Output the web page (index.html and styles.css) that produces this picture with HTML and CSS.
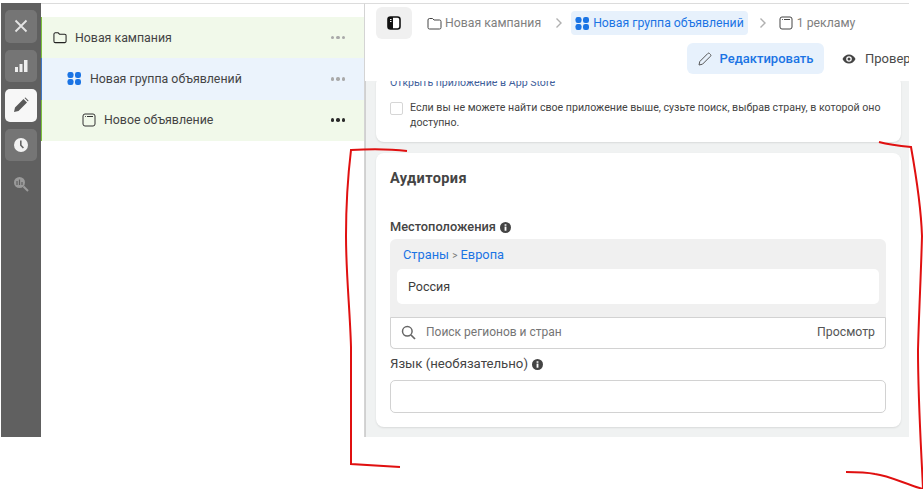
FILE: index.html
```
<!DOCTYPE html>
<html lang="ru">
<head>
<meta charset="utf-8">
<title>Аудитория</title>
<link rel="stylesheet" href="styles.css">
</head>
<body>
<div class="page">
  <div class="app">
    <nav class="rail">
      <button class="rail-btn"><svg width="16" height="16" viewBox="0 0 16 16"><path d="M2.500 2.500l11 11M13.500 2.500l-11 11" stroke="#e4e4e4" stroke-width="1.800" fill="none"/></svg></button>
      <button class="rail-btn"><svg width="15" height="15" viewBox="0 0 15 15"><path d="M1 9h3v5H1zM5.500 6h3v8h-3zM10 2h3.500v12H10z" fill="#eeeeee"/></svg></button>
      <button class="rail-btn rail-active"><svg width="16" height="16" viewBox="0 0 16 16"><path d="M1 15l1-4.500L10.500 2 14 5.500 5.500 14zM11.500 1l1-.5 3 3-.5 1z" fill="#5a5a5a"/></svg></button>
      <button class="rail-btn"><svg width="16" height="16" viewBox="0 0 16 16"><circle cx="8" cy="8" r="7" fill="#f2f2f2"/><path d="M7.800 3.500v4.700l2.600 2.800" stroke="#666" stroke-width="1.600" fill="none"/></svg></button>
      <div class="rail-plain"><svg width="16" height="16" viewBox="0 0 16 16"><circle cx="6.500" cy="6.500" r="5.500" fill="#9a9a9a"/><path d="M10.500 10.500l4.500 4.500" stroke="#9a9a9a" stroke-width="2"/><path d="M4 5v4M6.500 3.500V9M9 6v3" stroke="#606060" stroke-width="1.200"/></svg></div>
    </nav>

    <aside class="tree">
      <div class="tree-row row-green depth-0">
        <svg class="tree-icon" width="14" height="13" viewBox="0 0 15 13"><path d="M1 3a1.500 1.500 0 0 1 1.500-1.500h3L7 3h5.500A1.500 1.500 0 0 1 14 4.500v6a1.500 1.500 0 0 1-1.500 1.500h-10A1.500 1.500 0 0 1 1 10.500z" fill="none" stroke="#222" stroke-width="1.100"/></svg>
        <span class="tree-label">Новая кампания</span>
        <span class="dots dots-muted"><i></i><i></i><i></i></span>
      </div>
      <div class="tree-row row-blue depth-1">
        <svg class="tree-icon" width="15" height="15" viewBox="0 0 15 15"><rect x="0.500" y="1" width="6" height="6" rx="2.200" fill="#1b74e4"/><rect x="8" y="1" width="6" height="6" rx="2.200" fill="#1b74e4"/><rect x="0.500" y="8" width="6" height="6" rx="2.200" fill="#1b74e4"/><rect x="8" y="8" width="6" height="6" rx="2.200" fill="#1b74e4"/></svg>
        <span class="tree-label">Новая группа объявлений</span>
        <span class="dots dots-muted"><i></i><i></i><i></i></span>
      </div>
      <div class="tree-row row-green depth-2">
        <svg class="tree-icon" width="14" height="14" viewBox="0 0 14 14"><rect x="1" y="1" width="12" height="12" rx="2" fill="none" stroke="#333" stroke-width="1"/><path d="M3 3.500h.8M5 3.500h6" stroke="#333" stroke-width="1"/></svg>
        <span class="tree-label">Новое объявление</span>
        <span class="dots"><i></i><i></i><i></i></span>
      </div>
    </aside>

    <main class="main">
      <header class="header">
        <div class="crumbs">
          <button class="panel-btn"><svg width="14" height="14" viewBox="0 0 14 14"><rect x="1" y="1" width="12" height="12" rx="2.500" fill="#fff" stroke="#111" stroke-width="1.600"/><path d="M1 3a2 2 0 0 1 2-2h3v12H3a2 2 0 0 1-2-2z" fill="#111"/><path d="M3 3.500h1.500M3 5.500h1.500" stroke="#fff" stroke-width="1"/></svg></button>
          <span class="crumb">
            <svg width="15" height="13" viewBox="0 0 15 13"><path d="M1 3a1.500 1.500 0 0 1 1.500-1.500h3L7 3h5.500A1.500 1.500 0 0 1 14 4.500v6a1.500 1.500 0 0 1-1.500 1.500h-10A1.500 1.500 0 0 1 1 10.500z" fill="none" stroke="#444" stroke-width="1"/></svg>
            Новая кампания</span>
          <svg class="chev chev-first" width="8" height="12" viewBox="0 0 8 12"><path d="M1.500 1.500L6 6l-4.500 4.500" fill="none" stroke="#b0b0b0" stroke-width="1.400"/></svg>
          <span class="crumb crumb-active">
            <svg width="15" height="15" viewBox="0 0 15 15"><rect x="0.500" y="1" width="6" height="6" rx="2.200" fill="#1b74e4"/><rect x="8" y="1" width="6" height="6" rx="2.200" fill="#1b74e4"/><rect x="0.500" y="8" width="6" height="6" rx="2.200" fill="#1b74e4"/><rect x="8" y="8" width="6" height="6" rx="2.200" fill="#1b74e4"/></svg>
            Новая группа объявлений</span>
          <svg class="chev chev-second" width="8" height="12" viewBox="0 0 8 12"><path d="M1.500 1.500L6 6l-4.500 4.500" fill="none" stroke="#b0b0b0" stroke-width="1.400"/></svg>
          <span class="crumb crumb-last">
            <svg width="14" height="14" viewBox="0 0 14 14"><rect x="1" y="1" width="12" height="12" rx="2" fill="none" stroke="#444" stroke-width="1"/><path d="M3 3.500h.8M5 3.500h6" stroke="#444" stroke-width="1"/></svg>
            1 рекламу</span>
        </div>
        <div class="actions">
          <button class="edit-btn"><svg width="14" height="14" viewBox="0 0 14 14"><path d="M1 13l.8-3.500L9.800 1.500a1.200 1.200 0 0 1 1.700 0l1 1a1.200 1.200 0 0 1 0 1.700L4.500 12.200z" fill="none" stroke="#555" stroke-width="1"/></svg>Редактировать</button>
          <span class="review"><svg width="14" height="10" viewBox="0 0 14 10"><path d="M.5 5C2 2 4.300.5 7 .5S12 2 13.500 5C12 8 9.700 9.500 7 9.500S2 8 .5 5z" fill="#444"/><circle cx="7" cy="5" r="2.800" fill="#fff"/><circle cx="7" cy="5" r="1.500" fill="#444"/></svg>Проверить</span>
        </div>
      </header>

      <div class="scroller">
        <section class="card card-app">
          <a class="store-link">Открыть приложение в App Store</a>
          <div class="check-row">
            <span class="checkbox"></span>
            <p class="check-text">Если вы не можете найти свое приложение выше, сузьте поиск, выбрав страну, в которой оно доступно.</p>
          </div>
        </section>

        <section class="card card-audience">
          <h2 class="card-title">Аудитория</h2>
          <div class="field-label field-first">Местоположения
            <svg class="info" width="11" height="11" viewBox="0 0 12 12"><circle cx="6" cy="6" r="6" fill="#444"/><rect x="5" y="5" width="2" height="4.500" fill="#fff"/><rect x="5" y="2.500" width="2" height="1.600" fill="#fff"/></svg>
          </div>
          <div class="location">
            <div class="location-path"><a>Страны</a> <span class="sep">&gt;</span> <a>Европа</a></div>
            <div class="location-item">Россия</div>
            <div class="search">
              <svg width="15" height="15" viewBox="0 0 15 15"><circle cx="6.300" cy="6.300" r="4.800" fill="none" stroke="#666" stroke-width="1.500"/><path d="M10 10l4 4" stroke="#666" stroke-width="1.700"/></svg>
              <span class="search-text">Поиск регионов и стран</span>
              <span class="browse">Просмотр</span>
            </div>
          </div>
          <div class="field-label field-second">Язык (необязательно)
            <svg class="info" width="11" height="11" viewBox="0 0 12 12"><circle cx="6" cy="6" r="6" fill="#444"/><rect x="5" y="5" width="2" height="4.500" fill="#fff"/><rect x="5" y="2.500" width="2" height="1.600" fill="#fff"/></svg>
          </div>
          <div class="lang-input"></div>
        </section>
      </div>
    </main>
  </div>

  <svg class="scribble" width="923" height="489" viewBox="0 0 923 489">
    <path d="M407 151C390 149 370 149 351 150C348 175 346 205 346 236C346 275 350 310 351 347L351 464C367 465 383 466 400 467" />
    <path d="M879 142C890 145 900 146 911 147C916 175 921 205 922 236C921 275 919 310 918 350C918 400 921 445 923 489C905 484 890 476 875 474C865 472 855 472 846 472" />
  </svg>
</div>
</body>
</html>
```
FILE: styles.css
```
* { box-sizing: border-box; }
html, body { margin: 0; padding: 0; background: #fff; }
body { font-family: Roboto, "Liberation Sans", sans-serif; color: #3c3c3c; font-size: 12px; }
button { font: inherit; border: 0; padding: 0; }
a { color: #1b74e4; }
.page { position: relative; width: 923px; height: 489px; overflow: hidden; padding: 3px 14px 52px 1px; }
.app { display: flex; height: 434px; }

.rail { width: 40px; flex: none; background: #606060; display: flex; flex-direction: column; align-items: center; padding-top: 7px; gap: 7px; }
.rail-btn { width: 32px; height: 32.500px; background: #757575; border-radius: 5px; display: flex; align-items: center; justify-content: center; }
.rail-active { background: #f7f7f7; }
.rail-plain { height: 32px; display: flex; align-items: center; justify-content: center; }

.tree { width: 324px; flex: none; border-top: 1px solid #dcdcdc; border-right: 1px solid #d4d4d4; padding-top: 13px; }
.tree-row { height: 41.300px; display: flex; align-items: center; border-left: 1px solid #7cc13c; padding-right: 19px; font-size: 12.350px; }
.row-green { background: #f1f9ea; }
.row-blue { background: #ebf3fc; border-left-color: #3f78c6; }
.depth-0 { padding-left: 11px; }
.depth-1 { padding-left: 25px; }
.depth-2 { padding-left: 40px; }
.tree-icon { flex: none; margin-right: 8px; }
.tree-label { flex: 1; color: #444; }
.dots { display: flex; gap: 2px; }
.dots i { width: 3.500px; height: 3.500px; border-radius: 50%; background: #2a2a2a; }
.dots-muted i { background: #a9a9a9; }

.main { flex: 1; min-width: 0; display: flex; flex-direction: column; }
.header { height: 78px; flex: none; border-top: 1px solid #dcdcdc; padding: 3px 0 0 11px; overflow: hidden; }
.crumbs { display: flex; align-items: center; height: 32px; }
.panel-btn { width: 36px; height: 32px; background: #f0f0f0; border-radius: 6px; display: flex; align-items: center; justify-content: center; margin-right: 15px; flex: none; }
.crumb { display: inline-flex; align-items: center; gap: 3px; font-size: 12.250px; color: #808080; white-space: nowrap; }
.crumb svg { flex: none; }
.crumb-active { color: #1b74e4; background: #e7f1fc; border-radius: 4px; height: 24px; padding: 0 4px; }
.crumb-last { gap: 4px; }
.chev { flex: none; }
.chev-first { margin: 0 8px 0 14px; }
.chev-second { margin: 0 12px 0 11px; }
.actions { display: flex; align-items: center; margin-top: 4px; padding-left: 311px; white-space: nowrap; }
.edit-btn { flex: none; height: 31px; width: 137px; border-radius: 6px; background: #e7f1fc; color: #1b74e4; font-weight: 500; font-size: 13px; display: flex; align-items: center; justify-content: center; gap: 8px; }
.review { display: inline-flex; align-items: center; gap: 9px; margin-left: 18px; font-size: 13px; color: #4a4a4a; }

.scroller { flex: 1; min-height: 0; background: #f0f2f2; border-left: 1px solid #d0d0d0; padding: 0 8px 10px 10px; display: flex; flex-direction: column; justify-content: flex-end; gap: 11px; overflow: hidden; }
.card { flex: none; background: #fff; border-radius: 8px; box-shadow: 0 1px 2px rgba(0,0,0,.1); padding-left: 14px; padding-right: 15px; }
.card-app { padding-bottom: 12px; }
.store-link { display: block; font-size: 10.600px; line-height: 14px; color: #41609b; margin-bottom: 10px; }
.check-row { display: flex; gap: 7px; }
.checkbox { width: 13px; height: 13px; border: 1px solid #d6d6d6; border-radius: 2px; background: #fff; flex: none; margin-top: 2px; }
.check-text { margin: 0; font-size: 10.620px; line-height: 15px; color: #444; }

.card-audience { padding-top: 17px; padding-bottom: 14px; }
.card-title { margin: 0; font-size: 14.500px; line-height: 17px; font-weight: 700; color: #444; letter-spacing: .4px; }
.field-label { display: flex; align-items: center; gap: 4px; line-height: 16px; color: #444; }
.field-first { margin-top: 32px; font-size: 12.800px; font-weight: 500; }
.field-second { margin-top: 7px; font-size: 13.200px; font-weight: 400; }
.info { flex: none; }
.location { margin-top: 4px; background: #f0f0f0; border-radius: 6px 6px 4px 4px; }
.location-path { font-size: 12.800px; line-height: 16px; padding: 8px 13px 5px; color: #777; }
.sep { font-size: 10px; }
.location-item { margin: 0 7px; height: 35px; background: #fff; border-radius: 5px; display: flex; align-items: center; padding-left: 11px; font-size: 12.500px; color: #3c3c3c; }
.search { margin-top: 13px; height: 32px; background: #fff; border: 1px solid #d2d2d2; border-radius: 0 0 5px 5px; display: flex; align-items: center; padding: 0 10px 2px; font-size: 12px; }
.search-text { flex: 1; margin-left: 10px; color: #757575; }
.browse { color: #555; font-size: 12.300px; }
.lang-input { margin-top: 8px; height: 33px; border: 1px solid #d2d2d2; border-radius: 5px; background: #fff; }

.scribble { position: absolute; left: 0; top: 0; pointer-events: none; }
.scribble path { fill: none; stroke: #e01010; stroke-width: 2; }
```
